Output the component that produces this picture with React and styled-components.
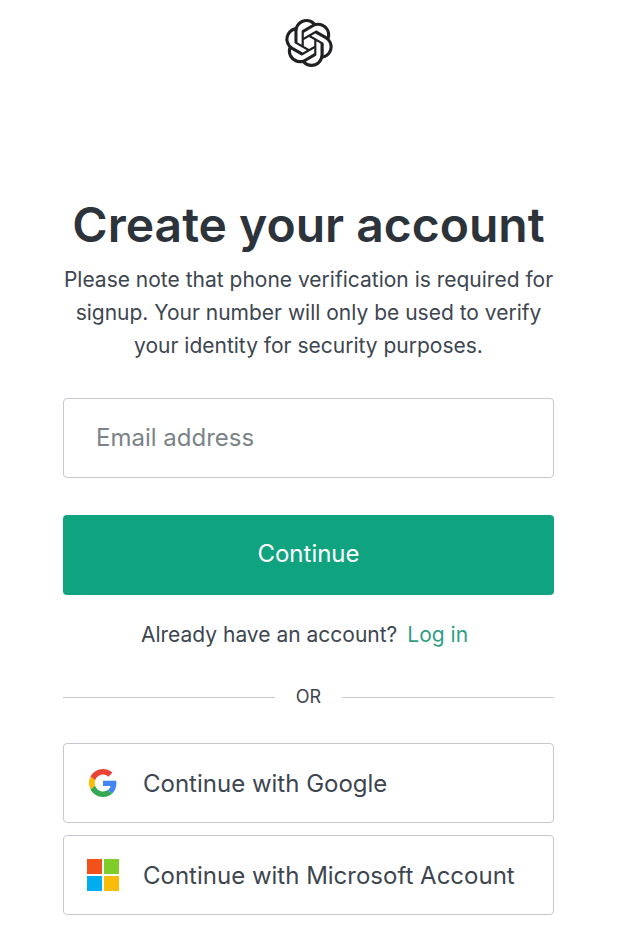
import styled, { createGlobalStyle, ThemeProvider } from "styled-components";
import { SiOpenai } from "react-icons/si";

const theme = {
  font: 'Inter, "Liberation Sans", sans-serif',
  color: {
    white: "#ffffff",
    logo: "#202123",
    title: "#2d333a",
    text: "#3d4650",
    placeholder: "#7b8388",
    border: "#c4c9d0",
    primary: "#10a37f",
    link: "#2f9e83"
  }
};

const GlobalStyle = createGlobalStyle`
  *, *::before, *::after {
    box-sizing: border-box;
  }

  body {
    background-color: ${props => props.theme.color.white};
    color: ${props => props.theme.color.text};
    font-family: ${props => props.theme.font};
    margin: 0;
  }

  button, input {
    font-family: inherit;
  }
`;

const Page = styled.div`
  padding: 19px 70px 32px 63px;
`;

const Header = styled.header`
  color: ${props => props.theme.color.logo};
  display: flex;
  justify-content: center;
  margin-bottom: 128px;
`;

const Main = styled.main`
  margin: 0 auto;
  max-width: 560px;
`;

const Title = styled.h1`
  color: ${props => props.theme.color.title};
  font-size: 48px;
  font-weight: 600;
  line-height: 60px;
  margin: 0 0 8px;
  text-align: center;
`;

const Description = styled.p`
  font-size: 21px;
  line-height: 33px;
  margin: 0 0 36px;
  text-align: center;
`;

const Form = styled.form`
  display: grid;
  gap: 37px;
`;

const EmailInput = styled.input`
  background-color: ${props => props.theme.color.white};
  border: 1px solid ${props => props.theme.color.border};
  border-radius: 4px;
  color: ${props => props.theme.color.title};
  font-size: 24px;
  height: 80px;
  padding: 0 32px 2px;
  width: 100%;

  &::placeholder {
    color: ${props => props.theme.color.placeholder};
    opacity: 1;
  }
`;

const SubmitButton = styled.button`
  background-color: ${props => props.theme.color.primary};
  border: 0;
  border-radius: 4px;
  color: ${props => props.theme.color.white};
  cursor: pointer;
  font-size: 24px;
  height: 80px;
  padding: 0 0 4px;
`;

const LoginText = styled.p`
  display: flex;
  font-size: 21px;
  gap: 10px;
  justify-content: center;
  line-height: 33px;
  margin: 23px 0 30px;
  padding-right: 8px;
`;

const LoginLink = styled.a`
  color: ${props => props.theme.color.link};
  text-decoration: none;
`;

const Divider = styled.div`
  align-items: center;
  display: flex;
  font-size: 18px;
  gap: 21px;
  line-height: 32px;
  margin-bottom: 30px;

  &::before,
  &::after {
    border-top: 1px solid ${props => props.theme.color.border};
    content: "";
    flex: 1;
  }
`;

const SocialList = styled.div`
  display: grid;
  gap: 12px;
`;

const SocialButton = styled.button`
  align-items: center;
  background-color: ${props => props.theme.color.white};
  border: 1px solid ${props => props.theme.color.border};
  border-radius: 4px;
  color: ${props => props.theme.color.text};
  cursor: pointer;
  display: flex;
  font-size: 24px;
  gap: 23px;
  height: 80px;
  padding: 0 22px;
  text-align: left;
`;

const IconSlot = styled.span`
  display: flex;
  flex: 0 0 34px;
  justify-content: center;
`;

const GoogleIcon = () => (
  <svg width="28" height="28" viewBox="0 0 48 48" aria-hidden="true">
    <path
      fill="#ea4335"
      d="M24 9.5c3.54 0 6.71 1.22 9.21 3.6l6.85-6.85C35.9 2.38 30.47 0 24 0 14.62 0 6.51 5.38 2.56 13.22l7.98 6.19C12.43 13.72 17.74 9.5 24 9.5z"
    />
    <path
      fill="#4285f4"
      d="M46.98 24.55c0-1.57-.15-3.09-.38-4.55H24v9.02h12.94c-.58 2.96-2.26 5.48-4.78 7.18l7.73 6c4.51-4.18 7.09-10.36 7.09-17.65z"
    />
    <path
      fill="#fbbc05"
      d="M10.53 28.59c-.48-1.45-.76-2.99-.76-4.59s.27-3.14.76-4.59l-7.98-6.19C.92 16.46 0 20.12 0 24c0 3.88.92 7.54 2.56 10.78l7.97-6.19z"
    />
    <path
      fill="#34a853"
      d="M24 48c6.48 0 11.93-2.13 15.89-5.81l-7.73-6c-2.15 1.45-4.92 2.3-8.16 2.3-6.26 0-11.57-4.22-13.47-9.91l-7.98 6.19C6.51 42.62 14.62 48 24 48z"
    />
  </svg>
);

const MicrosoftIcon = () => (
  <svg width="32" height="32" viewBox="0 0 32 32" aria-hidden="true">
    <rect width="15" height="15" fill="#f1511b" />
    <rect x="17" width="15" height="15" fill="#80cc28" />
    <rect y="17" width="15" height="15" fill="#00adef" />
    <rect x="17" y="17" width="15" height="15" fill="#fbbc09" />
  </svg>
);

const providers = [
  { name: "Google", icon: <GoogleIcon /> },
  { name: "Microsoft Account", icon: <MicrosoftIcon /> }
];

const App = () => (
  <ThemeProvider theme={theme}>
    <GlobalStyle />
    <Page>
      <Header>
        <SiOpenai size={48} aria-hidden="true" />
      </Header>
      <Main>
        <Title>Create your account</Title>
        <Description>
          Please note that phone verification is required for signup. Your
          number will only be used to verify your identity for security
          purposes.
        </Description>
        <Form onSubmit={event => event.preventDefault()}>
          <EmailInput
            type="email"
            name="email"
            aria-label="Email address"
            placeholder="Email address"
          />
          <SubmitButton type="submit">Continue</SubmitButton>
        </Form>
        <LoginText>
          Already have an account?
          <LoginLink href="#login">Log in</LoginLink>
        </LoginText>
        <Divider>OR</Divider>
        <SocialList>
          {providers.map(provider => (
            <SocialButton key={provider.name} type="button">
              <IconSlot>{provider.icon}</IconSlot>
              <span>Continue with {provider.name}</span>
            </SocialButton>
          ))}
        </SocialList>
      </Main>
    </Page>
  </ThemeProvider>
);

export default App;
